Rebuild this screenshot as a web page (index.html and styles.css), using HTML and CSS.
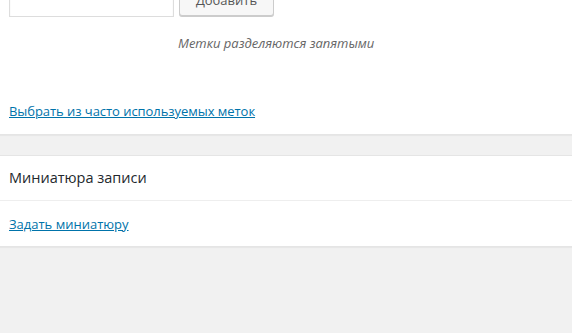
FILE: index.html
```html
<!DOCTYPE html>
<html lang="ru">
<head>
  <meta charset="UTF-8" />
  <title>Метки</title>
  <link rel="stylesheet" href="styles.css">
</head>
<body>
  <div class="postbox tags-box">
    <div class="tag-row">
      <input type="text" class="new-tag" />
      <button class="button">Добавить</button>
    </div>
    <p class="howto">Метки разделяются запятыми</p>
    <a href="#" class="tag-cloud-link">Выбрать из часто используемых меток</a>
  </div>

  <div class="postbox">
    <h2 class="hndle">Миниатюра записи</h2>
    <div class="inside">
      <a href="#">Задать миниатюру</a>
    </div>
  </div>
</body>
</html>
```

FILE: styles.css
```css
body {
  margin: 0;
  background: #f1f1f1;
  font-family: 'Open Sans', sans-serif;
  font-size: 13px;
  line-height: 20px;
  color: #444;
}

a {
  color: #0073aa;
  text-decoration: underline;
}

.postbox {
  background: #fff;
  border-top: 1px solid #e5e5e5;
  border-bottom: 1px solid #e5e5e5;
  box-shadow: 0 1px 1px rgba(0, 0, 0, 0.04);
  margin-bottom: 20px;
}

.tags-box {
  margin-top: -24px;
  padding: 12px 9px 13px;
}

.tag-row {
  display: flex;
  align-items: flex-start;
}

.new-tag {
  width: 165px;
  height: 28px;
  box-sizing: border-box;
  margin: 0;
  border: 1px solid #ddd;
  box-shadow: inset 0 1px 2px rgba(0, 0, 0, 0.07);
  background: #fff;
}

.button {
  margin: -1px 0 0 5px;
  height: 28px;
  width: 95px;
  box-sizing: border-box;
  padding: 0 10px 4px;
  border: 1px solid #ccc;
  border-radius: 3px;
  background: #f7f7f7;
  box-shadow: 0 1px 0 #ccc;
  color: #555;
  font-family: 'Open Sans', sans-serif;
  font-size: 13px;
}

.howto {
  margin: 16px 0 48px;
  padding-left: 169px;
  font-style: italic;
  color: #666;
}

.tag-cloud-link {
  display: inline-block;
  letter-spacing: -0.05px;
}

.hndle {
  margin: 0;
  padding: 12px 9px 13px;
  font-size: 14.5px;
  font-weight: 400;
  line-height: 19px;
  color: #23282d;
  border-bottom: 1px solid #eee;
}

.inside {
  padding: 13px 9px 12px;
}
```
